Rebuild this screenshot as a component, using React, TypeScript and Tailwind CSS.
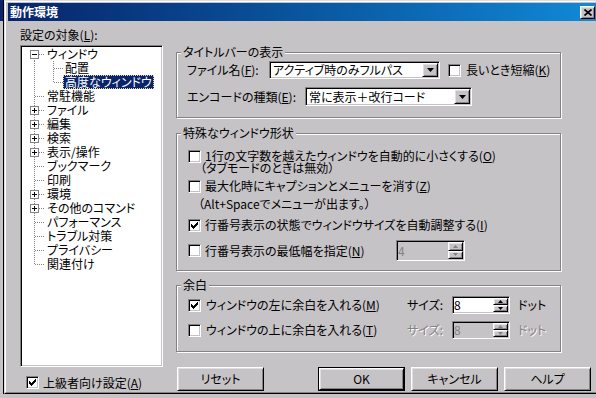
import React from "react";

const SUNKEN =
  "border border-t-[#848284] border-l-[#848284] border-r-white border-b-white shadow-[inset_1px_1px_0_#000,inset_-1px_-1px_0_#c6c3c6]";
const RAISED =
  "border border-t-white border-l-white border-r-black border-b-black shadow-[inset_1px_1px_0_#dedfde,inset_-1px_-1px_0_#848284]";
const DIM = "text-[#848284] [text-shadow:1px_1px_0_#fff]";

interface TreeNode {
  label: string;
  level: 1 | 2;
  box?: "plus" | "minus";
  selected?: boolean;
  lastChild?: boolean;
}

const tree: TreeNode[] = [
  { label: "ウィンドウ", level: 1, box: "minus" },
  { label: "配置", level: 2 },
  { label: "高度なウィンドウ", level: 2, selected: true, lastChild: true },
  { label: "常駐機能", level: 1 },
  { label: "ファイル", level: 1, box: "plus" },
  { label: "編集", level: 1, box: "plus" },
  { label: "検索", level: 1, box: "plus" },
  { label: "表示/操作", level: 1, box: "plus" },
  { label: "ブックマーク", level: 1 },
  { label: "印刷", level: 1 },
  { label: "環境", level: 1, box: "plus" },
  { label: "その他のコマンド", level: 1, box: "plus" },
  { label: "パフォーマンス", level: 1 },
  { label: "トラブル対策", level: 1 },
  { label: "プライバシー", level: 1 },
  { label: "関連付け", level: 1 },
];

// classic 7x7 check glyph, one rect per pixel
const CHECK_PX = [
  [6, 0], [5, 1], [6, 1], [0, 2], [4, 2], [5, 2], [6, 2],
  [0, 3], [1, 3], [3, 3], [4, 3], [5, 3],
  [0, 4], [1, 4], [2, 4], [3, 4], [4, 4],
  [1, 5], [2, 5], [3, 5], [2, 6],
];

function Mn({ k }: { k: string }) {
  return (
    <>
      (<u>{k}</u>)
    </>
  );
}

function Check({ on }: { on?: boolean }) {
  return (
    <span className={`w-[13px] h-[13px] shrink-0 flex items-center justify-center bg-white ${SUNKEN}`}>
      {on && (
        <svg width="7" height="7" viewBox="0 0 7 7" shapeRendering="crispEdges">
          {CHECK_PX.map(([x, y], i) => (
            <rect key={i} x={x} y={y} width="1" height="1" fill="#000" />
          ))}
        </svg>
      )}
    </span>
  );
}

function Combo({ text, cls }: { text: string; cls: string }) {
  return (
    <div className={`${cls} flex p-px bg-white ${SUNKEN}`}>
      <span className="flex-1 pl-[2px] flex items-center whitespace-nowrap">{text}</span>
      <span className={`w-[16px] flex items-center justify-center bg-[#c6c3c6] ${RAISED}`}>
        <svg width="7" height="4" viewBox="0 0 7 4">
          <polygon points="0,0 7,0 3.5,4" fill="#000" />
        </svg>
      </span>
    </div>
  );
}

function SpinBtn({ up, disabled }: { up?: boolean; disabled?: boolean }) {
  return (
    <span className={`flex-1 flex items-center justify-center bg-[#c6c3c6] ${RAISED}`}>
      <svg width="5" height="3" viewBox="0 0 5 3">
        <polygon points={up ? "2.5,0 5,3 0,3" : "0,0 5,0 2.5,3"} fill={disabled ? "#848284" : "#000"} />
      </svg>
    </span>
  );
}

function Spin({ value, disabled, cls }: { value: string; disabled?: boolean; cls: string }) {
  return (
    <div className={`${cls} flex p-px ${SUNKEN} ${disabled ? "bg-[#c6c3c6]" : "bg-white"}`}>
      <span className={`flex-1 flex items-center ${disabled ? "text-[#848284]" : ""}`}>{value}</span>
      <div className="w-[15px] flex flex-col">
        <SpinBtn up disabled={disabled} />
        <SpinBtn disabled={disabled} />
      </div>
    </div>
  );
}

function Btn({ label, def, cls }: { label: string; def?: boolean; cls: string }) {
  const face = (
    <span className={`w-full h-full flex items-center justify-center bg-[#c6c3c6] ${RAISED}`}>{label}</span>
  );
  return def ? <span className={`${cls} flex border border-black`}>{face}</span> : <span className={`${cls} flex`}>{face}</span>;
}

function Group({ title, cls, children }: { title: string; cls: string; children: React.ReactNode }) {
  return (
    <fieldset className={`${cls} w-[385px] border border-[#848284] shadow-[inset_1px_1px_0_#fff,1px_1px_0_#fff]`}>
      <legend className="ml-[4px] px-[2px] bg-[#c6c3c6] leading-[14px]">{title}</legend>
      <div className="flex flex-col">{children}</div>
    </fieldset>
  );
}

function Lines({ node, i }: { node: TreeNode; i: number }) {
  const first = i === 0;
  const last = i === tree.length - 1;
  const dot = { stroke: "#848284", strokeDasharray: "1 1", shapeRendering: "crispEdges" as const };
  const w = node.level === 2 ? 41 : 23;
  return (
    <svg width={w} height="14" className="shrink-0">
      <line x1="12.5" y1={first ? 7 : 0} x2="12.5" y2={last ? 8 : 14} {...dot} />
      {node.level === 1 && <line x1={node.box ? 17 : 13} y1="7.5" x2="23" y2="7.5" {...dot} />}
      {node.level === 2 && (
        <>
          <line x1="31.5" y1="0" x2="31.5" y2={node.lastChild ? 8 : 14} {...dot} />
          <line x1="32" y1="7.5" x2="41" y2="7.5" {...dot} />
        </>
      )}
      {node.box && (
        <>
          <rect x="8.5" y="3.5" width="8" height="8" fill="#fff" stroke="#848284" shapeRendering="crispEdges" />
          <line x1="10" y1="7.5" x2="15" y2="7.5" stroke="#000" shapeRendering="crispEdges" />
          {node.box === "plus" && <line x1="12.5" y1="5" x2="12.5" y2="10" stroke="#000" shapeRendering="crispEdges" />}
        </>
      )}
    </svg>
  );
}

export default function App() {
  return (
    <div className="w-[596px] h-[398px] overflow-hidden bg-[#c6c3c6] flex items-start font-['Noto_Sans_CJK_JP','Noto_Sans',sans-serif] text-[12px] leading-[14px] text-black [font-feature-settings:'palt']">
      <div className="w-[3px] h-full flex flex-col">
        <div className="h-[21px] bg-[#0a246a]" />
      </div>
      <div className="w-px h-[394px] bg-black" />
      <div className="flex-1 h-[394px] border-t border-l border-b border-t-[#dedfde] border-l-[#dedfde] border-b-black">
        <div className="h-full border-t border-l border-b border-t-white border-l-white border-b-[#848284] pt-px pl-[2px] flex flex-col">
          {/* title bar */}
          <div className="h-[18px] flex items-center bg-linear-to-r from-[#08246b] to-[#1189d6] pl-[2px] pr-px">
            <span className="text-white font-bold">動作環境</span>
            <span className={`ml-auto w-[15px] h-[13px] flex items-center justify-center bg-[#c6c3c6] ${RAISED}`}>
              <svg width="8" height="7" viewBox="0 0 8 7">
                <path d="M0.5 0.5 L7.5 6.5 M7.5 0.5 L0.5 6.5" stroke="#000" strokeWidth="1.7" />
              </svg>
            </span>
          </div>

          <div className="h-[371px] flex">
            {/* left: tree */}
            <div className="ml-[12px] w-[143px] flex flex-col">
              <div className="h-[24px] pt-[7px]">
                設定の対象<Mn k="L" />:
              </div>
              <div className={`h-[322px] bg-white pt-px pl-px ${SUNKEN}`}>
                {tree.map((n, i) => (
                  <div key={n.label} className="h-[14px] flex">
                    <Lines node={n} i={i} />
                    <span
                      className={`px-[2px] whitespace-nowrap ${
                        n.selected
                          ? "bg-[#0a246a] text-white outline-1 outline-dotted outline-[#e8e0a0] -outline-offset-1"
                          : ""
                      }`}
                    >
                      {n.label}
                    </span>
                  </div>
                ))}
              </div>
              <div className="mt-[9px] ml-[6px] h-[13px] flex items-center">
                <Check on />
                <span className="ml-[4px]">
                  上級者向け設定<Mn k="A" />
                </span>
              </div>
            </div>

            {/* right: options */}
            <div className="ml-[13px] w-[416px] flex flex-col pt-[24px]">
              <Group title="タイトルバーの表示" cls="h-[73px]">
                <div className="mt-[2px] h-[18px] pl-[10px] flex items-center">
                  <span className="w-[82px]">
                    ファイル名<Mn k="F" />:
                  </span>
                  <Combo text="アクティブ時のみフルパス" cls="w-[171px] h-[18px]" />
                  <span className="ml-[8px]">
                    <Check />
                  </span>
                  <span className="ml-[5px]">
                    長いとき短縮<Mn k="K" />
                  </span>
                </div>
                <div className="mt-[8px] h-[19px] pl-[10px] flex items-center">
                  <span className="w-[118px]">
                    エンコードの種類<Mn k="E" />:
                  </span>
                  <Combo text="常に表示＋改行コード" cls="w-[167px] h-[19px]" />
                </div>
              </Group>

              <Group title="特殊なウィンドウ形状" cls="mt-[8px] h-[145px]">
                <div className="mt-[10px] h-[12px] pl-[11px] flex items-center">
                  <Check />
                  <span className="ml-[4px] leading-[12px] whitespace-nowrap">
                    1行の文字数を越えたウィンドウを自動的に小さくする<Mn k="O" />
                  </span>
                </div>
                <div className="h-[12px] leading-[12px] pl-[23px]">（タブモードのときは無効）</div>
                <div className="mt-[5px] h-[14px] pl-[11px] flex items-center">
                  <Check />
                  <span className="ml-[4px] whitespace-nowrap">
                    最大化時にキャプションとメニューを消す<Mn k="Z" />
                  </span>
                </div>
                <div className="mt-[4px] h-[14px] pl-[21px]">（Alt+Spaceでメニューが出ます。）</div>
                <div className="mt-[7px] h-[14px] pl-[11px] flex items-center">
                  <Check on />
                  <span className="ml-[4px] whitespace-nowrap">
                    行番号表示の状態でウィンドウサイズを自動調整する<Mn k="I" />
                  </span>
                </div>
                <div className="mt-[8px] h-[21px] pl-[11px] flex items-center">
                  <Check />
                  <span className="ml-[4px] w-[191px] whitespace-nowrap">
                    行番号表示の最低幅を指定<Mn k="N" />
                  </span>
                  <Spin value="4" disabled cls="w-[69px] h-[21px]" />
                </div>
              </Group>

              <Group title="余白" cls="mt-[7px] h-[74px]">
                <div className="mt-[4px] h-[18px] pl-[11px] flex items-center">
                  <span className="w-[219px] flex items-center">
                    <Check on />
                    <span className="ml-[5px] whitespace-nowrap">
                      ウィンドウの左に余白を入れる<Mn k="M" />
                    </span>
                  </span>
                  <span className="w-[45px]">サイズ:</span>
                  <Spin value="8" cls="w-[58px] h-[18px]" />
                  <span className="ml-[8px]">ドット</span>
                </div>
                <div className="mt-[7px] h-[18px] pl-[11px] flex items-center">
                  <span className="w-[219px] flex items-center">
                    <Check />
                    <span className="ml-[5px] whitespace-nowrap">
                      ウィンドウの上に余白を入れる<Mn k="T" />
                    </span>
                  </span>
                  <span className={`w-[45px] ${DIM}`}>サイズ:</span>
                  <Spin value="8" disabled cls="w-[58px] h-[18px]" />
                  <span className={`ml-[8px] ${DIM}`}>ドット</span>
                </div>
              </Group>

              <div className="mt-[15px] h-[24px] pl-px flex">
                <Btn label="リセット" cls="w-[87px] h-[24px]" />
                <Btn label="OK" def cls="ml-[54px] w-[87px] h-[24px]" />
                <Btn label="キャンセル" cls="ml-[6px] w-[87px] h-[24px]" />
                <Btn label="ヘルプ" cls="ml-[6px] w-[87px] h-[24px]" />
              </div>
            </div>
          </div>
        </div>
      </div>
    </div>
  );
}
